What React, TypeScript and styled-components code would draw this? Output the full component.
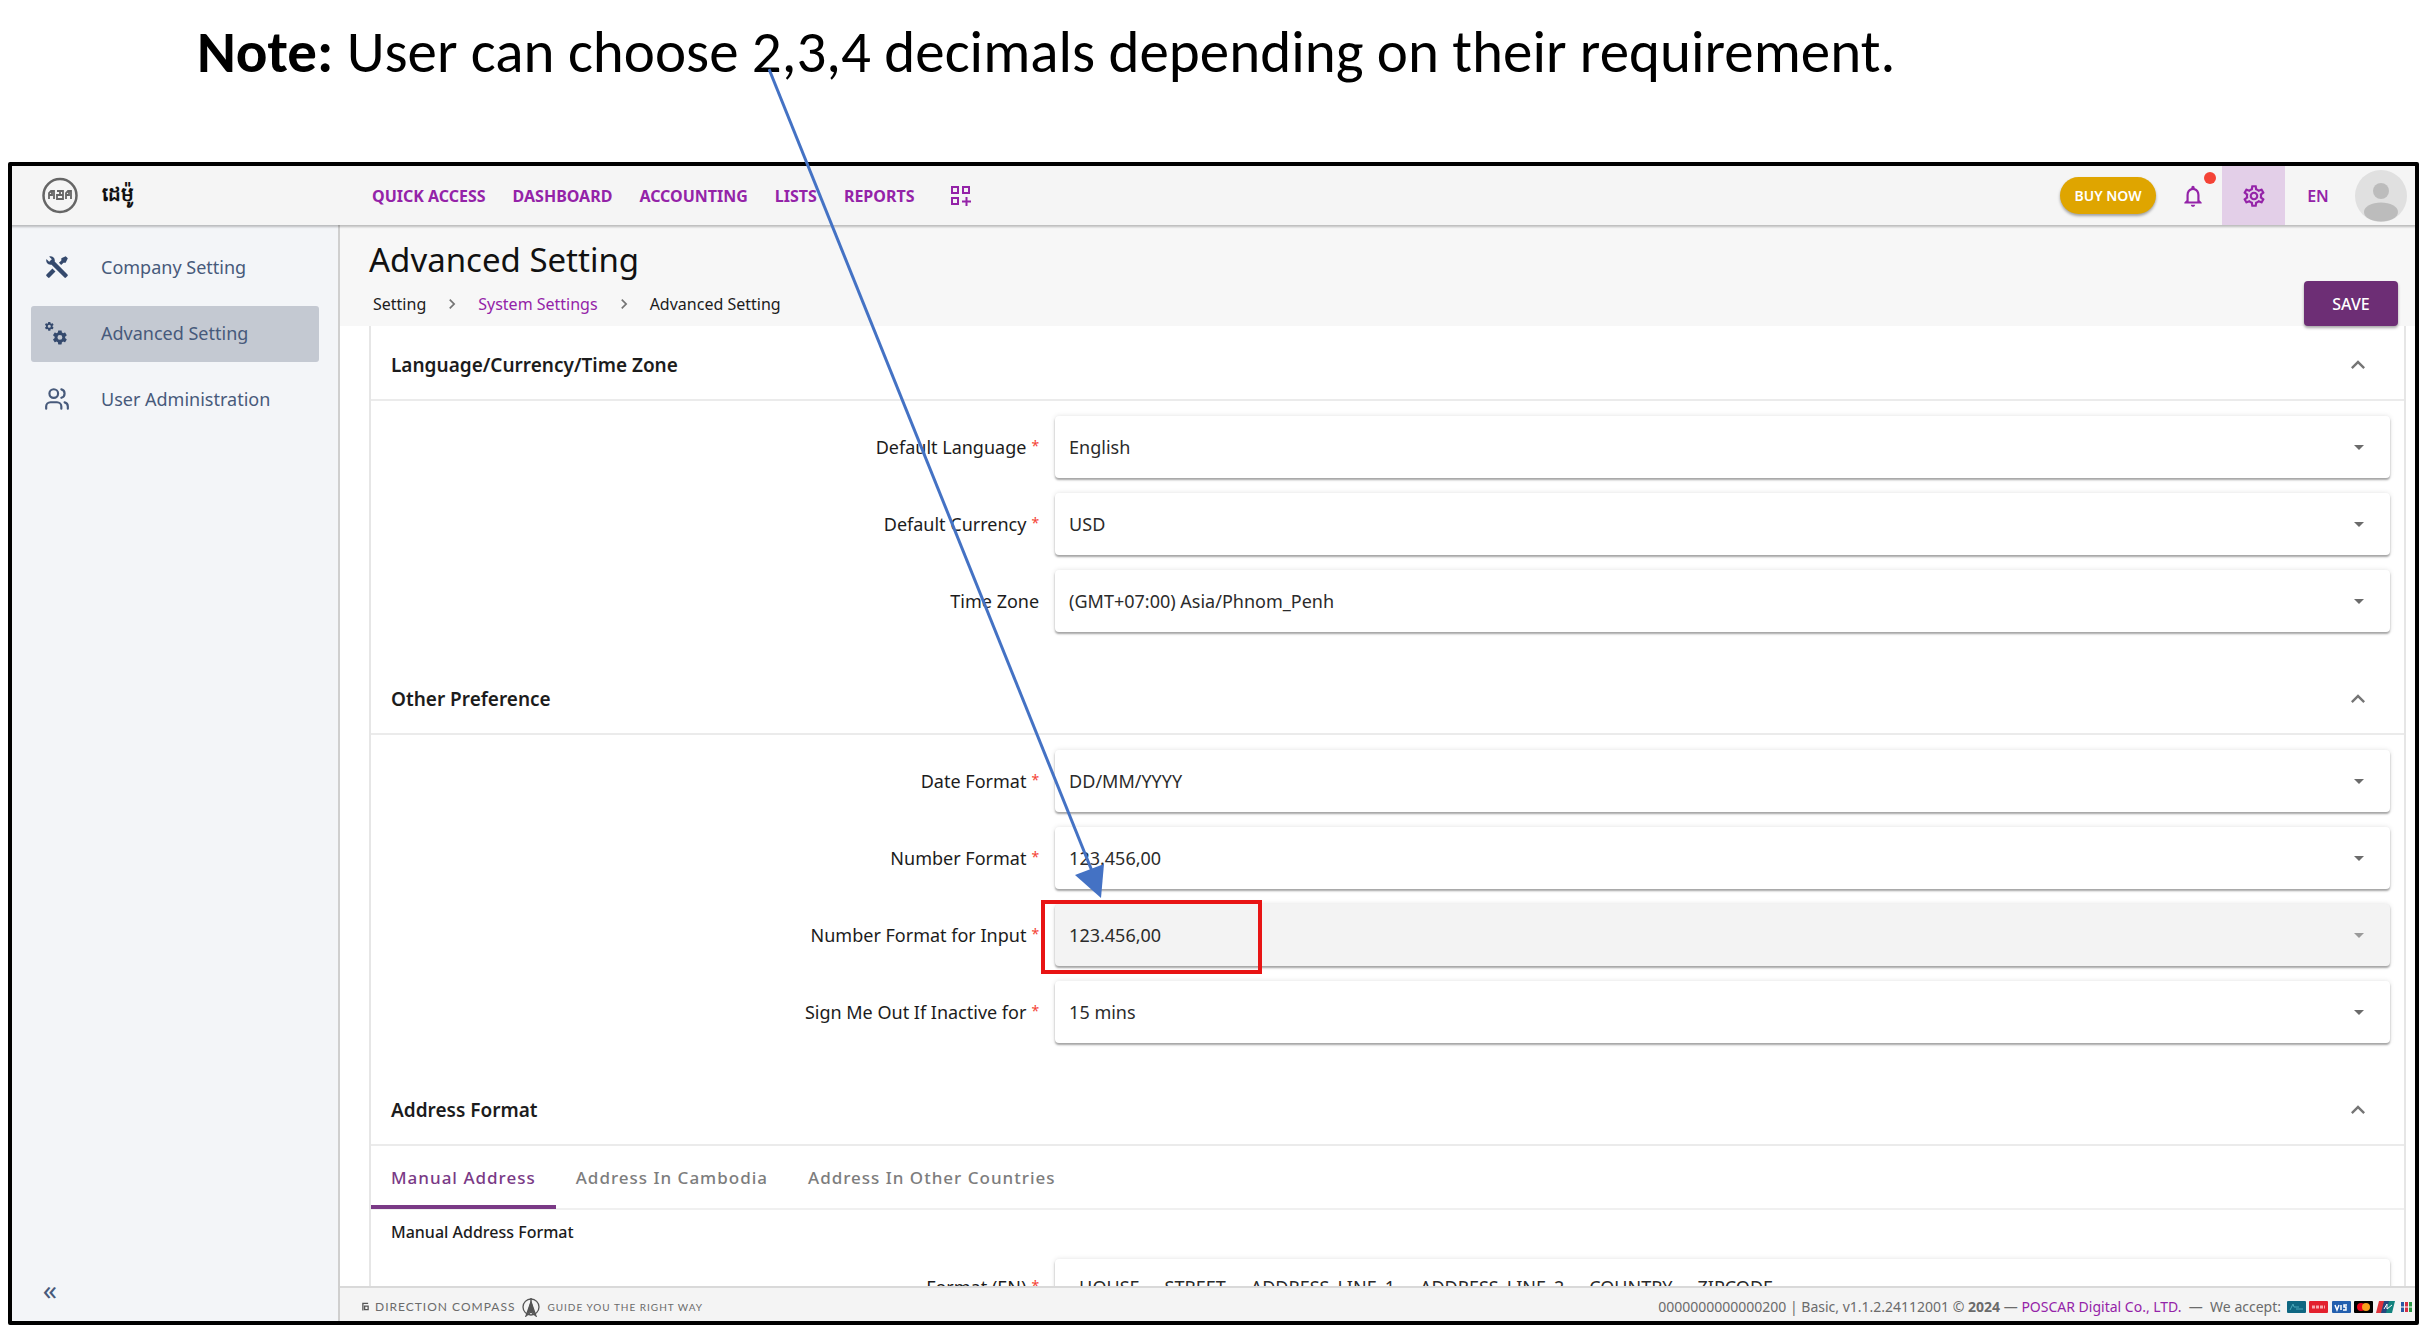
import React from "react";
import styled, { createGlobalStyle } from "styled-components";
import { Users } from "lucide-react";
import { MdKeyboardArrowUp, MdKeyboardArrowRight, MdNotificationsNone, MdOutlineSettings } from "react-icons/md";

const purple = "#9423a8";
const deepPurple = "#7a3a86";
const slate = "#475a7b";

const GlobalStyle = createGlobalStyle`
  * { box-sizing: border-box; }
  body { margin: 0; background: #fff; color: #1c1c1c; font-family: "Noto Sans", "Open Sans", sans-serif; }
  button, select { font: inherit; color: inherit; }
  a { text-decoration: none; }
`;

const Page = styled.div`
  position: relative;
  display: flex;
  flex-direction: column;
  height: 100vh;
  overflow: hidden;
  padding: 0 9px 5px 8px;
`;

const Note = styled.p`
  flex: none;
  height: 162px;
  margin: 0;
  padding: 20px 0 0 189px;
  color: #000;
  font-family: Carlito, Lato, sans-serif;
  font-size: 59px;
  line-height: 64px;
  white-space: nowrap;
`;

const Frame = styled.div`
  flex: 1;
  min-height: 0;
  display: flex;
  flex-direction: column;
  border: 4px solid #000;
  border-radius: 2px;
`;

const TopBar = styled.header`
  position: relative;
  flex: none;
  display: flex;
  align-items: center;
  height: 59px;
  padding-right: 8px;
  background: #f5f5f5;
  box-shadow: 0 1px 2px 1px rgba(0, 0, 0, 0.24);
`;

const Brand = styled.div`
  flex: none;
  display: flex;
  align-items: center;
  gap: 24px;
  width: 360px;
  padding-left: 30px;
  color: #111;
  font-size: 20px;
  font-weight: 700;
`;

const Nav = styled.nav`
  flex: 1;
  display: flex;
  align-items: center;
  gap: 27px;
`;

const NavLink = styled.a`
  color: ${purple};
  font-size: 16px;
  font-weight: 700;
  line-height: 24px;
`;

const IconButton = styled.button`
  display: flex;
  align-items: center;
  justify-content: center;
  padding: 0;
  border: 0;
  background: none;
  color: ${(p: { $tone?: string }) => p.$tone || purple};
`;

const AppsButton = styled(IconButton)`
  margin-left: 8px;
`;

const Tools = styled.div`
  display: flex;
  align-items: center;
  height: 100%;
`;

const BuyButton = styled.button`
  height: 37px;
  width: 96px;
  margin-right: 24px;
  padding: 0;
  border: 0;
  border-radius: 19px;
  background: #dfa500;
  box-shadow: 0 2px 3px rgba(0, 0, 0, 0.35);
  color: #fff;
  font-size: 14px;
  font-weight: 600;
`;

const BellButton = styled(IconButton)`
  position: relative;
  width: 26px;
  margin-right: 16px;
`;

const Dot = styled.span`
  position: absolute;
  top: -11px;
  right: -10px;
  width: 12px;
  height: 12px;
  border-radius: 50%;
  background: #f44336;
`;

const GearButton = styled(IconButton)`
  width: 63px;
  height: 100%;
  background: #e3cfe8;
`;

const LangButton = styled(IconButton)`
  width: 70px;
  padding-right: 4px;
  font-size: 16px;
  font-weight: 600;
`;

const Body = styled.div`
  flex: 1;
  min-height: 0;
  display: flex;
`;

const Sidebar = styled.aside`
  flex: none;
  display: flex;
  flex-direction: column;
  width: 328px;
  padding: 15px 19px 14px 19px;
  border-right: 2px solid #cfcfcf;
  background: #f3f5f8;
`;

const Menu = styled.nav`
  flex: 1;
  display: flex;
  flex-direction: column;
  gap: 10px;
`;

const MenuLink = styled.a<{ $active?: boolean }>`
  display: flex;
  align-items: center;
  height: 56px;
  padding-bottom: 2px;
  border-radius: 3px;
  background: ${(p) => (p.$active ? "#c4c9d2" : "transparent")};
  color: ${slate};
  font-size: 18px;
`;

const MenuIcon = styled.span`
  display: flex;
  width: 70px;
  padding-left: 13px;
`;

const Collapse = styled(IconButton)`
  width: 38px;
  height: 36px;
  font-size: 28px;
`;

const Main = styled.div`
  flex: 1;
  min-width: 0;
  display: flex;
  flex-direction: column;
`;

const TitleBar = styled.div`
  flex: none;
  display: flex;
  align-items: flex-end;
  justify-content: space-between;
  height: 101px;
  padding: 0 17px 0 29px;
  background: #f7f7f7;
`;

const Title = styled.h1`
  margin: 0;
  color: #111;
  font-size: 33px;
  font-weight: 400;
  line-height: 46px;
`;

const Crumbs = styled.nav`
  display: flex;
  align-items: center;
  gap: 16px;
  padding: 5px 0 6px 4px;
  font-size: 16px;
  line-height: 32px;
`;

const Crumb = styled.a<{ $link?: boolean }>`
  color: ${(p) => (p.$link ? purple : "#1c1c1c")};
`;

const SaveButton = styled.button`
  width: 94px;
  height: 45px;
  border: 0;
  border-radius: 4px;
  background: #6d2e75;
  box-shadow: 0 2px 3px rgba(0, 0, 0, 0.35);
  color: #fff;
  font-size: 16px;
  font-weight: 500;
`;

const Scroller = styled.main`
  flex: 1;
  min-height: 0;
  overflow: hidden;
  padding: 0 9px 0 29px;
`;

const Card = styled.div`
  border: solid #e6e6e6;
  border-width: 0 2px;
`;

const SectionHead = styled.div`
  display: flex;
  align-items: center;
  justify-content: space-between;
  height: 75px;
  padding: 4px 32px 0 20px;
  border-bottom: 2px solid #ebebeb;
`;

const SectionTitle = styled.h2`
  margin: 0;
  font-size: 19px;
  font-weight: 600;
  line-height: 28px;
`;

const Rows = styled.div`
  display: grid;
  gap: 15px;
  padding: 15px 14px 28px 0;
`;

const Row = styled.div`
  display: grid;
  grid-template-columns: 41fr 80fr;
  align-items: center;
`;

const Label = styled.label`
  padding-right: 16px;
  font-size: 18px;
  text-align: right;
`;

const Star = styled.span`
  margin-left: 5px;
  color: #f44336;
  font-size: 14px;
  vertical-align: 3px;
`;

const Field = styled.div<{ $off?: boolean }>`
  position: relative;
  display: flex;
  align-items: center;
  height: 62px;
  border-radius: 4px;
  background: ${(p) => (p.$off ? "#f3f3f3" : "#fff")};
  box-shadow: 0 2px 2px rgba(0, 0, 0, 0.32), 0 0 5px rgba(0, 0, 0, 0.12);
`;

const Select = styled.select`
  flex: 1;
  height: 100%;
  padding: 0 14px;
  border: 0;
  appearance: none;
  background: none;
  color: #2b2b2b;
  font-size: 18px;
  opacity: 1;
`;

const Caret = styled.span<{ $off?: boolean }>`
  margin-right: 26px;
  border: 5px solid transparent;
  border-bottom: 0;
  border-top-color: ${(p) => (p.$off ? "#9a9a9a" : "#6b6b6b")};
`;

const Highlight = styled.span`
  position: absolute;
  top: -4px;
  left: -14px;
  width: 221px;
  height: 74px;
  border: 4px solid #e81414;
  pointer-events: none;
`;

const Tabs = styled.div`
  display: flex;
  height: 64px;
  border-bottom: 2px solid #f0f0f0;
`;

const Tab = styled.button<{ $active?: boolean }>`
  height: 63px;
  padding: 4px 20px 0;
  border: 0;
  border-bottom: 4px solid ${(p) => (p.$active ? deepPurple : "transparent")};
  background: none;
  color: ${(p) => (p.$active ? deepPurple : "#7d7d7d")};
  font-size: 17px;
  font-weight: 500;
  letter-spacing: 1px;
`;

const SubTitle = styled.h3`
  margin: 0;
  padding: 10px 20px 0;
  font-size: 16px;
  font-weight: 500;
  line-height: 24px;
`;

const Tokens = styled.button`
  display: flex;
  align-items: center;
  gap: 25px;
  height: 56px;
  padding: 0 24px;
  border: 0;
  border-radius: 4px;
  background: #fff;
  box-shadow: 0 2px 2px rgba(0, 0, 0, 0.32), 0 0 5px rgba(0, 0, 0, 0.12);
  color: #2b2b2b;
  font-size: 18px;
`;

const Footer = styled.footer`
  flex: none;
  display: flex;
  align-items: center;
  justify-content: space-between;
  height: 35px;
  padding: 4px 0 0 22px;
  border-top: 2px solid #d9d9d9;
  background: #f4f4f4;
  color: #6b6b6b;
`;

const Motto = styled.div`
  display: flex;
  align-items: center;
  gap: 6px;
  font-family: Lato, sans-serif;
  font-size: 12px;
  letter-spacing: 1px;
`;

const Small = styled.span`
  font-size: 10px;
`;

const Legal = styled.div`
  display: flex;
  align-items: center;
  gap: 6px;
  font-size: 14px;
  white-space: pre;
`;

const LegalLink = styled.a`
  color: ${purple};
`;

const Arrow = styled.svg`
  position: absolute;
  top: 68px;
  left: 768px;
  pointer-events: none;
`;

const cog =
  "M12,15.5A3.5,3.5 0 0,1 8.5,12A3.5,3.5 0 0,1 12,8.5A3.5,3.5 0 0,1 15.5,12A3.5,3.5 0 0,1 12,15.5M19.43,12.97C19.47,12.65 19.5,12.33 19.5,12C19.5,11.67 19.47,11.34 19.43,11L21.54,9.37C21.73,9.22 21.78,8.95 21.66,8.73L19.66,5.27C19.54,5.05 19.27,4.96 19.05,5.05L16.56,6.05C16.04,5.66 15.5,5.32 14.87,5.07L14.5,2.42C14.46,2.18 14.25,2 14,2H10C9.75,2 9.54,2.18 9.5,2.42L9.13,5.07C8.5,5.32 7.96,5.66 7.44,6.05L4.95,5.05C4.73,4.96 4.46,5.05 4.34,5.27L2.34,8.73C2.21,8.95 2.27,9.22 2.46,9.37L4.57,11C4.53,11.34 4.5,11.67 4.5,12C4.5,12.33 4.53,12.65 4.57,12.97L2.46,14.63C2.27,14.78 2.21,15.05 2.34,15.27L4.34,18.73C4.46,18.95 4.73,19.03 4.95,18.95L7.44,17.94C7.96,18.34 8.5,18.68 9.13,18.93L9.5,21.58C9.54,21.82 9.75,22 10,22H14C14.25,22 14.46,21.82 14.5,21.58L14.87,18.93C15.5,18.67 16.04,18.34 16.56,17.94L19.05,18.95C19.27,19.03 19.54,18.95 19.66,18.73L21.66,15.27C21.78,15.05 21.73,14.78 21.54,14.63L19.43,12.97Z";

const ToolsIcon = () => (
  <svg width="26" height="26" viewBox="0 0 24 24" fill="#34496d">
    <path d="M21.71 20.29L20.29 21.71A1 1 0 0 1 18.88 21.71L7 9.85A3.81 3.81 0 0 1 6 10A4 4 0 0 1 2.22 4.7L4.76 7.24L5.29 6.71L6.71 5.29L7.24 4.76L4.7 2.22A4 4 0 0 1 10 6A3.81 3.81 0 0 1 9.85 7L21.71 18.88A1 1 0 0 1 21.71 20.29M2.29 18.88A1 1 0 0 0 2.29 20.29L3.71 21.71A1 1 0 0 0 5.12 21.71L10.59 16.25L7.76 13.42M20 2L16 4V6L13.83 8.17L15.83 10.17L18 8H20L22 4Z" />
  </svg>
);

const CogsIcon = () => (
  <svg width="26" height="26" viewBox="0 0 26 26" fill="#34496d">
    <path d={cog} transform="translate(0 1) scale(.44)" />
    <path d={cog} transform="translate(7.5 9) scale(.7)" />
  </svg>
);

const LogoMark = () => (
  <svg width="36" height="37" viewBox="0 0 36 37" fill="none" stroke="#666">
    <circle cx="18" cy="18.500" r="16.500" strokeWidth="2.500" />
    <g strokeWidth="1.800">
      <path d="M7 22v-6l2-2h3v8M7 18h3M10 14v5" />
      <path d="M15 14h6v8h-6v-4h6M18 14v4" />
      <path d="M24 22v-6l2-2h3v8M24 18h3M27 14v5" />
    </g>
  </svg>
);

const AppsIcon = () => (
  <svg width="22" height="22" viewBox="0 0 22 22" fill="none" stroke={purple} strokeWidth="2">
    <path d="M2 2h6v6H2zM13 2h6v6h-6zM2 13h6v6H2zM16.500 12v9M12 16.500h9" />
  </svg>
);

const Avatar = () => (
  <svg width="52" height="52" viewBox="0 0 52 52">
    <circle cx="26" cy="26" r="26" fill="#e0e0e0" />
    <circle cx="26" cy="21" r="8" fill="#bcbcbc" />
    <ellipse cx="26" cy="42" rx="17" ry="9.500" fill="#bcbcbc" />
  </svg>
);

const CompassIcon = () => (
  <svg width="20" height="20" viewBox="0 0 20 20" fill="none" stroke="#555" strokeWidth="1.300">
    <circle cx="10" cy="10" r="8" />
    <path d="M10 1v6M10 5L5 19l5-4 5 4z" />
    <path d="M10 5L7 16l3-2 3 2z" fill="#555" />
  </svg>
);

const DirectionIcon = () => (
  <svg width="7" height="9" viewBox="0 0 8 9" fill="none" stroke="#555" strokeWidth="1.500">
    <path d="M1 9V1h6M3 4h4v4H3z" />
  </svg>
);

const CardLogos = () => (
  <svg width="128" height="13" viewBox="0 0 128 13">
    <rect x="0" y="1" width="19" height="12" rx="1" fill="#0f6782" />
    <path d="M3 10l3-6 1 3h5M9 9h7" stroke="#4aa7b9" fill="none" />
    <rect x="22" y="1" width="19" height="12" rx="1" fill="#e3202d" />
    <path d="M25 7h13" stroke="#f8a9ae" strokeWidth="3" strokeDasharray="3 1" />
    <rect x="45" y="1" width="19" height="12" rx="1" fill="#235fae" />
    <path d="M48 5l2 5 2-5M54 5v5M60 5h-3v2h2v3h-3" stroke="#fff" strokeWidth="1.500" fill="none" />
    <rect x="67" y="1" width="19" height="12" rx="1" fill="#000" />
    <circle cx="74" cy="7" r="4" fill="#eb001b" />
    <circle cx="79" cy="7" r="4" fill="#f79e1b" />
    <path d="M92 1h6l-3 12h-6z" fill="#e0343c" />
    <path d="M97 1h6l-3 12h-6z" fill="#24477e" />
    <path d="M102 1h6l-3 12h-6z" fill="#13837f" />
    <path d="M97 9l3-5v5l5-4" stroke="#fff" fill="none" />
    <rect x="114" y="2" width="3" height="10" fill="#2a5aa5" />
    <rect x="118" y="2" width="3" height="10" fill="#d62f45" />
    <rect x="122" y="2" width="3" height="10" fill="#2c9a48" />
    <path d="M114 7h11" stroke="#fff" />
  </svg>
);

type FieldRow = { id: string; label: string; value: string; required?: boolean; off?: boolean };

const localeRows: FieldRow[] = [
  { id: "lang", label: "Default Language", value: "English", required: true },
  { id: "currency", label: "Default Currency", value: "USD", required: true },
  { id: "zone", label: "Time Zone", value: "(GMT+07:00) Asia/Phnom_Penh" },
];

const preferenceRows: FieldRow[] = [
  { id: "date", label: "Date Format", value: "DD/MM/YYYY", required: true },
  { id: "number", label: "Number Format", value: "123.456,00", required: true },
  { id: "numberInput", label: "Number Format for Input", value: "123.456,00", required: true, off: true },
  { id: "signOut", label: "Sign Me Out If Inactive for", value: "15 mins", required: true },
];

const addressParts = ["HOUSE", "STREET", "ADDRESS_LINE_1", "ADDRESS_LINE_2", "COUNTRY", "ZIPCODE"];

const Heading = ({ children }: { children: React.ReactNode }) => (
  <SectionHead>
    <SectionTitle>{children}</SectionTitle>
    <IconButton $tone="#757575" aria-label="Collapse section">
      <MdKeyboardArrowUp size={28} />
    </IconButton>
  </SectionHead>
);

const FieldRows = ({ rows }: { rows: FieldRow[] }) => (
  <Rows>
    {rows.map((r) => (
      <Row key={r.id}>
        <Label htmlFor={r.id}>
          {r.label}
          {r.required && <Star>*</Star>}
        </Label>
        <Field $off={r.off}>
          <Select id={r.id} disabled={r.off}>
            <option>{r.value}</option>
          </Select>
          <Caret $off={r.off} />
          {r.off && <Highlight />}
        </Field>
      </Row>
    ))}
  </Rows>
);

export default function App() {
  return (
    <Page>
      <GlobalStyle />
      <Note>
        <b>Note:</b> User can choose 2,3,4 decimals depending on their requirement.
      </Note>
      <Frame>
        <TopBar>
          <Brand>
            <LogoMark />
            <span lang="km">ដេម៉ូ</span>
          </Brand>
          <Nav>
            {["QUICK ACCESS", "DASHBOARD", "ACCOUNTING", "LISTS", "REPORTS"].map((t) => (
              <NavLink href="#" key={t}>
                {t}
              </NavLink>
            ))}
            <AppsButton aria-label="Apps">
              <AppsIcon />
            </AppsButton>
          </Nav>
          <Tools>
            <BuyButton>BUY NOW</BuyButton>
            <BellButton aria-label="Notifications">
              <MdNotificationsNone size={26} />
              <Dot />
            </BellButton>
            <GearButton aria-label="Settings">
              <MdOutlineSettings size={26} />
            </GearButton>
            <LangButton>EN</LangButton>
            <IconButton aria-label="Account">
              <Avatar />
            </IconButton>
          </Tools>
        </TopBar>
        <Body>
          <Sidebar>
            <Menu>
              <MenuLink href="#">
                <MenuIcon>
                  <ToolsIcon />
                </MenuIcon>
                Company Setting
              </MenuLink>
              <MenuLink href="#" $active>
                <MenuIcon>
                  <CogsIcon />
                </MenuIcon>
                Advanced Setting
              </MenuLink>
              <MenuLink href="#">
                <MenuIcon>
                  <Users size={26} />
                </MenuIcon>
                User Administration
              </MenuLink>
            </Menu>
            <Collapse $tone={slate} aria-label="Collapse menu">
              «
            </Collapse>
          </Sidebar>
          <Main>
            <TitleBar>
              <div>
                <Title>Advanced Setting</Title>
                <Crumbs>
                  <Crumb href="#">Setting</Crumb>
                  <MdKeyboardArrowRight size={20} color="#757575" />
                  <Crumb href="#" $link>
                    System Settings
                  </Crumb>
                  <MdKeyboardArrowRight size={20} color="#757575" />
                  <Crumb href="#">Advanced Setting</Crumb>
                </Crumbs>
              </div>
              <SaveButton>SAVE</SaveButton>
            </TitleBar>
            <Scroller>
              <Card>
                <Heading>Language/Currency/Time Zone</Heading>
                <FieldRows rows={localeRows} />
                <Heading>Other Preference</Heading>
                <FieldRows rows={preferenceRows} />
                <Heading>Address Format</Heading>
                <Tabs role="tablist">
                  <Tab role="tab" $active>
                    Manual Address
                  </Tab>
                  <Tab role="tab">Address In Cambodia</Tab>
                  <Tab role="tab">Address In Other Countries</Tab>
                </Tabs>
                <SubTitle>Manual Address Format</SubTitle>
                <Rows>
                  <Row>
                    <Label htmlFor="formatEn">
                      Format (EN)<Star>*</Star>
                    </Label>
                    <Tokens id="formatEn">
                      {addressParts.map((p) => (
                        <span key={p}>{p}</span>
                      ))}
                    </Tokens>
                  </Row>
                </Rows>
              </Card>
            </Scroller>
            <Footer>
              <Motto>
                <DirectionIcon />
                <span>DIRECTION COMPASS</span>
                <CompassIcon />
                <Small>GUIDE YOU THE RIGHT WAY</Small>
              </Motto>
              <Legal>
                <span>
                  0000000000000200 | Basic, v1.1.2.24112001 © <b>2024</b> — <LegalLink href="#">POSCAR Digital Co., LTD.</LegalLink>
                  {"  —  We accept:"}
                </span>
                <CardLogos />
              </Legal>
            </Footer>
          </Main>
        </Body>
      </Frame>
      <Arrow width="340" height="832" viewBox="0 0 340 832">
        <path d="M1 1L326 808" stroke="#4472c4" strokeWidth="3" fill="none" />
        <path d="M333 830L307 807L336 796z" fill="#4472c4" />
      </Arrow>
    </Page>
  );
}
